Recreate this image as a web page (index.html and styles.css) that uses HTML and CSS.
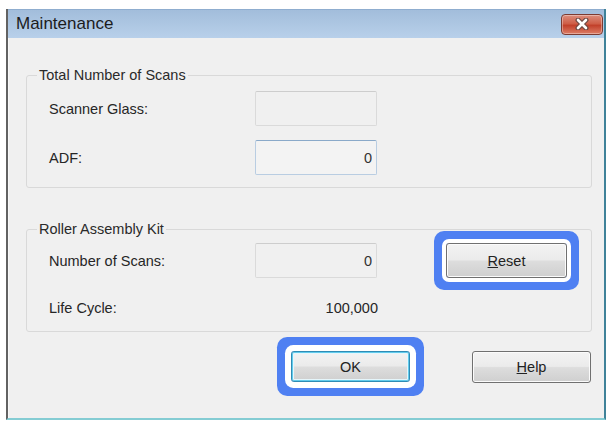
FILE: index.html
```html
<!DOCTYPE html>
<html>
<head>
	<meta charset="UTF-8">
	<title>Maintenance</title>
	<link rel="stylesheet" href="styles.css">
</head>
<body>
	<div class="window">
		<div class="titlebar">
			<span class="title">Maintenance</span>
			<button class="close" type="button" aria-label="Close">
				<svg width="16" height="12" viewBox="0 0 16 12">
					<path d="M4 2 L12 10 M12 2 L4 10" stroke="#6b4a44" stroke-width="5" stroke-linecap="round" fill="none"/>
					<path d="M4 2 L12 10 M12 2 L4 10" stroke="#ffffff" stroke-width="2.6" stroke-linecap="round" fill="none"/>
				</svg>
			</button>
		</div>

		<div class="content">
			<fieldset class="group group-scans">
				<legend>Total Number of Scans</legend>
				<div class="row">
					<label for="glass">Scanner Glass:</label>
					<input type="text" id="glass" class="field" value="" readonly>
				</div>
				<div class="row">
					<label for="adf">ADF:</label>
					<input type="text" id="adf" class="field field-active" value="0" readonly>
				</div>
			</fieldset>

			<fieldset class="group group-roller">
				<legend>Roller Assembly Kit</legend>
				<div class="row">
					<label for="roller">Number of Scans:</label>
					<input type="text" id="roller" class="field" value="0" readonly>
					<button type="button" class="btn btn-reset mark"><u>R</u>eset</button>
				</div>
				<div class="row">
					<span class="label">Life Cycle:</span>
					<span class="value">100,000</span>
				</div>
			</fieldset>

			<div class="actions">
				<button type="button" class="btn btn-default mark-wide">OK</button>
				<button type="button" class="btn"><u>H</u>elp</button>
			</div>
		</div>
	</div>
</body>
</html>
```

FILE: styles.css
```css
body {
	margin: 0;
	background-color: #ffffff;
	font-family: "Liberation Sans", Arial, sans-serif;
	color: #262626;
}

.window {
	margin: 9px 0 0 6px;
	width: 600px;
	height: 411px;
	box-sizing: border-box;
	border-left: 2px solid #626262;
	border-right: 2px solid #3f8299;
	border-bottom: 2px solid #84ccd3;
	display: flex;
	flex-direction: column;
}

.titlebar {
	height: 29px;
	display: flex;
	align-items: center;
	justify-content: space-between;
	padding: 0 1px 0 8px;
	background: linear-gradient(#a2bddb, #b8d0ea);
	border-top: 1px solid #8fadcf;
	box-sizing: border-box;
}

.title {
	font-size: 17px;
	color: #1c1c1c;
}

.close {
	width: 42px;
	height: 21px;
	padding: 0;
	border: 1px solid #7d3b31;
	border-radius: 4px;
	background: linear-gradient(#dc8e7d, #cf5f48 45%, #c2412b 55%, #dd7d66);
	display: flex;
	align-items: center;
	justify-content: center;
	box-shadow: inset 0 0 0 1px rgba(255, 255, 255, 0.35);
}

.content {
	flex: 1;
	background-color: #f0f0f0;
	border-left: 1px solid #f8f8f8;
	padding: 29px 12px 0 17px;
	display: flex;
	flex-direction: column;
}

.group {
	margin: 0;
	min-width: 0;
	padding: 8px 0 12px 22px;
	border: 1px solid #d9d9d9;
	border-radius: 3px;
	display: flex;
	flex-direction: column;
	gap: 14px;
}

.group legend {
	margin-left: -12px;
	padding: 0 2px;
	font-size: 14.5px;
	line-height: 16px;
	color: #2a2a2a;
}

.group-roller {
	margin-top: 33px;
	padding-top: 6px;
	padding-bottom: 6px;
	gap: 12px;
}

.row {
	display: flex;
	align-items: center;
	height: 35px;
	font-size: 14.5px;
}

.row label, .row .label {
	width: 206px;
}

.field {
	width: 122px;
	height: 35px;
	box-sizing: border-box;
	padding: 0 4px;
	border: 1px solid #dadada;
	border-top-color: #cdcdcd;
	border-radius: 2px;
	background-color: #f0f0f0;
	text-align: right;
	font-family: inherit;
	font-size: 14.5px;
	color: #333;
	outline: none;
}

.field-active {
	border-color: #b9cde2;
	border-top-color: #8aa9c9;
	background-color: #f3f3f3;
}

.value {
	width: 123px;
	text-align: right;
}

.btn {
	width: 119px;
	height: 32px;
	padding: 0;
	border: 1px solid #707070;
	border-radius: 3px;
	background: linear-gradient(#f3f3f3, #ebebeb 48%, #dddddd 52%, #cfcfcf);
	box-shadow: inset 0 0 0 1px #fbfbfb;
	font-family: inherit;
	font-size: 14.5px;
	color: #222;
}

.btn-reset {
	width: 121px;
	height: 35px;
	margin-left: 69px;
}

.btn-default {
	border-color: #2f8cb5;
	box-shadow: inset 0 0 0 1px #62cbec, inset 0 0 0 2px #e6f6fb;
	height: 31px;
}

/* blue highlight rings from the manual */
.mark {
	box-shadow: inset 0 0 0 1px #fbfbfb, 0 0 0 4px #ffffff, 0 0 0 12px #4f80f2;
}

.mark-wide {
	box-shadow: inset 0 0 0 1px #62cbec, inset 0 0 0 2px #e6f6fb, 0 0 0 6px #ffffff, 0 0 0 14px #4f80f2;
}

.actions {
	display: flex;
	justify-content: flex-end;
	gap: 62px;
	margin-top: 19px;
	padding-right: 1px;
}
```
